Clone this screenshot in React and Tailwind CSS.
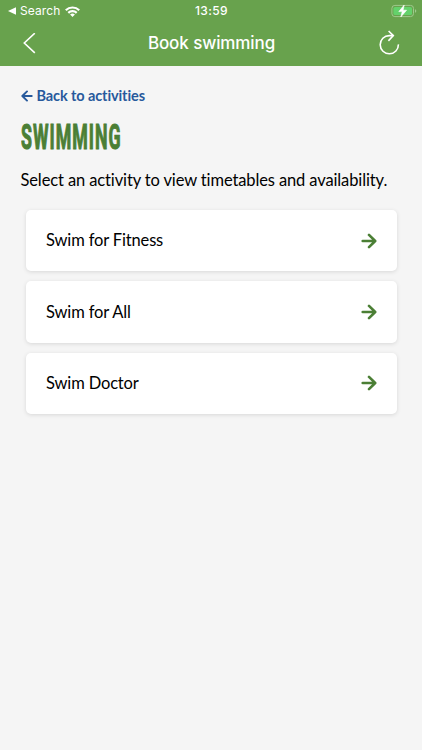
const activities = [
  { id: "fitness", name: "Swim for Fitness" },
  { id: "all", name: "Swim for All" },
  { id: "doctor", name: "Swim Doctor" },
];

function WifiIcon() {
  return (
    <svg className="h-[11px] w-[15px]" viewBox="0 0 15 11" fill="none" stroke="currentColor" strokeWidth="2.2">
      <path d="M.8 4.2a9.6 9.6 0 0 1 13.4 0" />
      <path d="M3.3 6.9a6 6 0 0 1 8.4 0" />
      <path d="M5.1 8.6a3.5 3.5 0 0 1 4.8 0L7.5 11Z" fill="currentColor" stroke="none" />
    </svg>
  );
}

function BatteryIcon() {
  return (
    <svg className="h-[14px] w-[26px]" viewBox="0 0 26 14" fill="none">
      <rect x=".9" y="1.4" width="21.6" height="11.2" rx="3" stroke="#9fc98d" />
      <rect x="2.4" y="2.9" width="18.6" height="8.2" rx="1.7" fill="#64d16b" />
      <path d="M24 5.2v3.6c.8-.3 1.3-1 1.3-1.8S24.8 5.5 24 5.2Z" fill="#9fc98d" />
      <path d="M13.2 1 7.8 7.6h3.4L9.8 13l5.8-6.800h-3.500Z" fill="#fff" stroke="#fff" strokeWidth=".6" strokeLinejoin="round" />
    </svg>
  );
}

function Arrow({ className }) {
  return (
    <svg className={className} viewBox="0 0 16 16" fill="none" stroke="currentColor" strokeLinecap="round" strokeLinejoin="round">
      <path d="M1.7 8h12M8 1.9 14.2 8 8 14.1" />
    </svg>
  );
}

function StatusBar() {
  return (
    <div className="grid h-[22px] grid-cols-3 items-center pr-[5px] pl-[8px] font-['Inter',sans-serif] text-[12px]">
      <div className="flex items-center">
        <svg className="mr-[4px] h-[8px] w-[8px]" viewBox="0 0 8 8" fill="currentColor">
          <path d="M0 4 8 .3v7.4Z" />
        </svg>
        <span className="mr-[5px] tracking-[0.1px]">Search</span>
        <WifiIcon />
      </div>
      <span className="pr-[2px] text-center font-medium tracking-[0.4px]">13:59</span>
      <div className="flex justify-end">
        <BatteryIcon />
      </div>
    </div>
  );
}

function NavBar() {
  return (
    <div className="grid h-[44px] grid-cols-[1fr_auto_1fr] items-center pr-[22px] pl-[23px]">
      <button aria-label="Back" className="justify-self-start">
        <svg className="h-[22px] w-[13px]" viewBox="0 0 13 22" fill="none" stroke="currentColor" strokeWidth="1.6">
          <path d="M11.8.2 1.3 10l10.500 9.800" />
        </svg>
      </button>
      <h1 className="font-['Inter',sans-serif] text-[17px] font-medium tracking-[-0.1px]">Book swimming</h1>
      <button aria-label="Reload" className="justify-self-end">
        <svg className="h-[24px] w-[21px] overflow-visible" viewBox="0 0 21 24" fill="none" stroke="currentColor" strokeWidth="1.6">
          <path d="M19.4 12.4a9.100 9.100 0 1 1-9.100-8.800h4" />
          <path d="m9.600-1 4.700 4.600-4.900 5.300" />
        </svg>
      </button>
    </div>
  );
}

export default function App() {
  return (
    <div className="min-h-[750px] bg-[#f5f5f5] font-['Lato',sans-serif] text-black [font-variant-ligatures:none]">
      <header className="h-[66px] bg-[#68a24d] text-white">
        <StatusBar />
        <NavBar />
      </header>
      <main className="px-[20.5px] pt-[20px]">
        <a href="#" className="flex h-[20px] items-center gap-[4px] text-[14.5px] font-bold tracking-[-0.1px] text-[#27599c]">
          <Arrow className="h-[12px] w-[12px] rotate-180 stroke-[2.6]" />
          Back to activities
        </a>
        <h2 className="mt-[10px] h-[42px] origin-left scale-x-[0.5] font-['Roboto',sans-serif] text-[35.5px] leading-[42px] font-bold tracking-[2px] whitespace-nowrap text-[#4b7f35] [-webkit-text-stroke:1.2px_#4b7f35]">
          SWIMMING
        </h2>
        <p className="mt-[10px] h-[24px] text-[16.5px] leading-[24px] tracking-[-0.12px] whitespace-nowrap">
          Select an activity to view timetables and availability.
        </p>
        <ul className="mx-[5px] mt-[18px] flex flex-col gap-[10px]">
          {activities.map((activity) => (
            <li
              key={activity.id}
              className="flex h-[61.3px] items-center justify-between rounded-[5px] bg-white pr-[19.5px] pl-[20.5px] text-[16.5px] tracking-[-0.15px] shadow-[0_1px_4px_rgba(0,0,0,0.12)]"
            >
              {activity.name}
              <Arrow className="h-[16px] w-[16px] stroke-[2.6] text-[#4b7f35]" />
            </li>
          ))}
        </ul>
      </main>
    </div>
  );
}
